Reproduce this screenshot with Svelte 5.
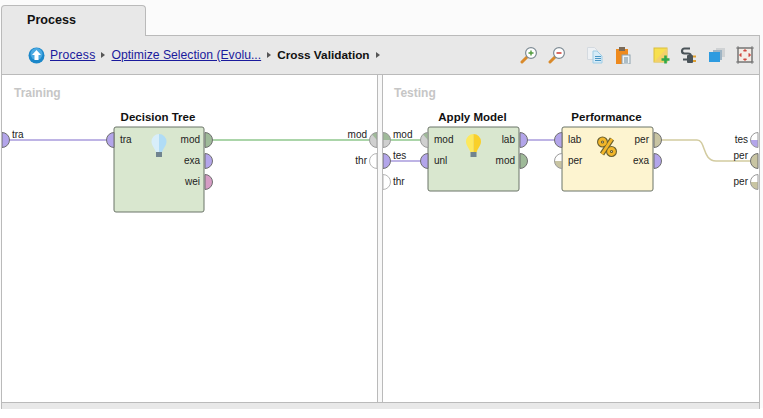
<script>
  const purple = '#b3a5ea';
  const green = '#9fba99';
  const tan = '#c8c4a2';
  const pink = '#d59cc4';
  const R = 7.5;

  // page coordinates, each svg has a matching viewBox
  const nodes = [
    {
      panel: 'left', title: 'Decision Tree', x: 114, y: 127, w: 90, h: 85, fill: '#d9e7cf', icon: 'bulb-blue',
      inputs: [{ label: 'tra', color: purple }],
      outputs: [{ label: 'mod', color: green }, { label: 'exa', color: purple }, { label: 'wei', color: pink }]
    },
    {
      panel: 'right', title: 'Apply Model', x: 428, y: 127, w: 91, h: 64, fill: '#d9e7cf', icon: 'bulb-yellow',
      inputs: [{ label: 'mod', mix: true }, { label: 'unl', color: purple }],
      outputs: [{ label: 'lab', color: purple }, { label: 'mod', color: green }]
    },
    {
      panel: 'right', title: 'Performance', x: 562, y: 127, w: 91, h: 64, fill: '#fdf4d0', icon: 'percent',
      inputs: [{ label: 'lab', color: purple }, { label: 'per', half: tan }],
      outputs: [{ label: 'per', color: tan }, { label: 'exa', color: purple }]
    }
  ];

  const leftEdge = [{ label: 'tra', y: 140, ty: 138, color: purple }];
  const leftSinks = [
    { label: 'mod', y: 140, ty: 138, mix: true },
    { label: 'thr', y: 161, ty: 164 }
  ];
  const rightSources = [
    { label: 'mod', y: 140, ty: 138, mix: true, wide: true },
    { label: 'tes', y: 161, ty: 159, color: purple },
    { label: 'thr', y: 182, ty: 185 }
  ];
  const rightSinks = [
    { label: 'tes', y: 140, ty: 143, half: purple },
    { label: 'per', y: 161, ty: 159, color: tan },
    { label: 'per', y: 182, ty: 185, half: tan }
  ];

  const portY = (node, i) => node.y + 13 + i * 21;

  // half disc, dir -1 bulges to the left, 1 to the right
  const disc = (x, y, r, dir) =>
    `M${x} ${y - r}A${r} ${r} 0 0 ${dir < 0 ? 0 : 1} ${x} ${y + r}Z`;
  const lower = (x, y, r, dir) => `M${x + dir * r} ${y}A${r} ${r} 0 0 ${dir < 0 ? 0 : 1} ${x} ${y + r}L${x} ${y}Z`;
  const upper = (x, y, r, dir) => `M${x} ${y - r}A${r} ${r} 0 0 ${dir < 0 ? 0 : 1} ${x + dir * r} ${y}L${x} ${y}Z`;
</script>

{#snippet port(p, x, y, dir)}
  {#if p.mix}
    <path d={disc(x, y, R, dir)} fill="#cfcfcf" />
    {#if p.wide}
      <path d={upper(x, y, R, dir)} fill={green} />
    {:else}
      <path d={`M${x} ${y - R}A${R} ${R} 0 0 0 ${x - 5} ${y - 5.5}L${x} ${y}Z`} fill={green} />
    {/if}
    <path d={disc(x, y, R, dir)} class="edge soft" />
  {:else if p.half}
    <path d={disc(x, y, R, dir)} fill="#fff" />
    <path d={lower(x, y, R, dir)} fill={p.half} />
    <path d={disc(x, y, R, dir)} class="edge soft" />
  {:else if p.color}
    <path d={disc(x, y, R, dir)} class="edge" style:fill={p.color} />
  {:else}
    <path d={disc(x, y, R, dir)} class="edge soft empty" />
  {/if}
{/snippet}

{#snippet bulb(cx, y, left, right)}
  <path d={`M${cx} ${y}a7.500 7.500 0 0 0 -7.500 7.500c0 4 3 6 4.500 11h3z`} fill={left} />
  <path d={`M${cx} ${y}a7.500 7.500 0 0 1 7.500 7.500c0 4 -3 6 -4.500 11h-3z`} fill={right} />
  <rect x={cx - 3} y={y + 18} width="6" height="5" fill="#71848f" />
{/snippet}

{#snippet operator(node)}
  {@const cx = node.x + node.w / 2}
  <text class="title" x={cx - 1} y={node.y - 6} text-anchor="middle">{node.title}</text>
  <rect x={node.x} y={node.y} width={node.w} height={node.h} rx="2" fill={node.fill} class="box" />
  {#each node.inputs as p, i}
    {@render port(p, node.x, portY(node, i), -1)}
    <text class="lbl" x={node.x + 6} y={portY(node, i) + 3}>{p.label}</text>
  {/each}
  {#each node.outputs as p, i}
    {@render port(p, node.x + node.w + 1, portY(node, i), 1)}
    <text class="lbl" x={node.x + node.w - 4} y={portY(node, i) + 3} text-anchor="end">{p.label}</text>
  {/each}
  {#if node.icon === 'bulb-blue'}
    {@render bulb(cx, 134, '#d8eefa', '#b0dcf6')}
  {:else if node.icon === 'bulb-yellow'}
    {@render bulb(cx, 134, '#fde95e', '#f9d02a')}
  {:else}
    <g stroke="#6a6030" stroke-width="5" fill="none">
      <circle cx="602.500" cy="142" r="3" />
      <circle cx="611.500" cy="151.500" r="3" />
      <path d="M612 139L602 154" />
    </g>
    <g stroke="#f2b62a" stroke-width="2.800" fill="none">
      <circle cx="602.500" cy="142" r="3" />
      <circle cx="611.500" cy="151.500" r="3" />
      <path d="M612 139L602 154" />
    </g>
  {/if}
{/snippet}

<div class="app">
  <div class="tabs">
    <div class="tab">Process</div>
  </div>

  <div class="frame">
    <div class="toolbar">
      <svg class="up" width="17" height="17" viewBox="0 0 17 17">
        <circle cx="8.500" cy="8.500" r="8" fill="#1b87c9" />
        <circle cx="8.500" cy="7" r="6" fill="#4aa9e2" />
        <path d="M8.500 3L13 8H10.500V13H6.500V8H4Z" fill="#fff" />
      </svg>
      <span class="crumb link first">Process</span>
      <i class="arrow"></i>
      <span class="crumb link">Optimize Selection (Evolu...</span>
      <i class="arrow"></i>
      <span class="crumb current">Cross Validation</span>
      <i class="arrow"></i>

      <div class="actions">
        <svg class="ico" viewBox="0 0 18 18">
          <path d="M7 11L2 16" stroke="#d98a2b" stroke-width="3" stroke-linecap="round" />
          <circle cx="11" cy="7" r="5.400" fill="#fff" stroke="#7c8a93" stroke-width="1.200" />
          <path d="M8.500 7h5M11 4.500v5" stroke="#4f9a3c" stroke-width="1.400" />
        </svg>
        <svg class="ico" viewBox="0 0 18 18">
          <path d="M7 11L2 16" stroke="#d98a2b" stroke-width="3" stroke-linecap="round" />
          <circle cx="11" cy="7" r="5.400" fill="#fff" stroke="#7c8a93" stroke-width="1.200" />
          <path d="M8.500 7h5" stroke="#d0453c" stroke-width="1.600" />
        </svg>
        <svg class="ico group" viewBox="0 0 18 18">
          <path d="M1.500 1.500h7l3 3v9h-10z" fill="#eef1f4" stroke="#d4dae0" />
          <path d="M7 5h4l5 5v7H7z" fill="#d6ebf7" stroke="#9fcde6" />
          <path d="M9 10.500h6M9 12.500h6M9 14.500h6" stroke="#4a97c6" />
        </svg>
        <svg class="ico" viewBox="0 0 18 18">
          <rect x="2" y="3" width="12" height="15" fill="#ee8a1e" />
          <rect x="5" y="1" width="6" height="4" fill="#7a6a58" />
          <rect x="8" y="9" width="8" height="9" fill="#eef3f6" stroke="#8ea2ae" />
          <path d="M10 12h4M10 14h4M10 16h4" stroke="#6d8796" />
        </svg>
        <svg class="ico group" viewBox="0 0 18 18">
          <rect x="2" y="2" width="13" height="14" fill="#f7e050" stroke="#d9bd3a" />
          <path d="M2 16L15 2V16Z" fill="#f3d06a" />
          <path d="M13.500 9.500v8M9.500 13.500h8" stroke="#2fa84a" stroke-width="2.600" />
        </svg>
        <svg class="ico" viewBox="0 0 18 18">
          <path d="M10 2.500H4.500a2.500 2.500 0 0 0 0 5H8a2.500 2.500 0 0 1 0 6H3" fill="none" stroke="#4a5358" stroke-width="2.200" />
          <rect x="7" y="9" width="6" height="8" rx="1" fill="#4a5358" />
          <path d="M13 10.500h3M13 15h3" stroke="#e0a030" stroke-width="2" />
        </svg>
        <svg class="ico" viewBox="0 0 18 18">
          <rect x="8" y="2" width="9" height="9" fill="#cfd2d4" />
          <rect x="5" y="4" width="9" height="10" fill="#9eb4c4" />
          <rect x="1" y="6" width="11" height="10" fill="#2d9be0" />
        </svg>
        <svg class="ico" viewBox="0 0 18 18">
          <rect x="2" y="2" width="14" height="14" fill="#f3ece6" stroke="#6d6d6d" />
          <path d="M0 2h18M0 16h18M2 0v18M16 0v18" stroke="#6d6d6d" stroke-width=".8" />
          <path d="M7.500 5L9 3.500 10.500 5zM7.500 13L9 14.500 10.500 13zM5 7.500L3.500 9 5 10.500zM13 7.500L14.500 9 13 10.500z" fill="#d0453c" stroke="#d0453c" />
        </svg>
      </div>
    </div>

    <div class="panels">
      <div class="panel">
        <svg class="canvas" viewBox="2 75 375 327" width="375" height="327">
          <text class="name" x="14" y="97">Training</text>
          <path d="M8 140H107" class="wire" stroke="#a99bdc" />
          <path d="M212 140H370" class="wire" stroke="#8fc78c" />
          {#each nodes.filter((n) => n.panel === 'left') as node}
            {@render operator(node)}
          {/each}
          {#each leftEdge as p}
            {@render port(p, 2, p.y, 1)}
            <text class="lbl" x="12" y={p.ty}>{p.label}</text>
          {/each}
          {#each leftSinks as p}
            {@render port(p, 377, p.y, -1)}
            <text class="lbl" x="367" y={p.ty} text-anchor="end">{p.label}</text>
          {/each}
        </svg>
      </div>
      <div class="gutter"></div>
      <div class="panel grow">
        <svg class="canvas" viewBox="383 75 376 327" width="376" height="327">
          <text class="name" x="394" y="97">Testing</text>
          <path d="M390 140H421" class="wire" stroke="#8fc78c" />
          <path d="M390 161H421" class="wire" stroke="#a99bdc" />
          <path d="M526 140H555" class="wire" stroke="#a99bdc" />
          <path d="M660 140H697C706 140 702 161 716 161H751" class="wire" stroke="#d2cba0" />
          {#each nodes.filter((n) => n.panel === 'right') as node}
            {@render operator(node)}
          {/each}
          {#each rightSources as p}
            {@render port(p, 383, p.y, 1)}
            <text class="lbl" x="393" y={p.ty}>{p.label}</text>
          {/each}
          {#each rightSinks as p}
            {@render port(p, 758, p.y, -1)}
            <text class="lbl" x="748" y={p.ty} text-anchor="end">{p.label}</text>
          {/each}
        </svg>
      </div>
    </div>

    <div class="status"></div>
  </div>
</div>

<style>
  :global(body) {
    background: #fff;
  }

  .app {
    width: 763px;
    height: 418px;
    overflow: hidden;
    font-family: "Liberation Sans", Arial, sans-serif;
    background: linear-gradient(#fbfbfb 408px, #fff 408px);
  }

  .tabs {
    height: 35px;
    padding: 5px 0 0 1px;
    box-sizing: border-box;
    display: flex;
  }

  .tab {
    width: 145px;
    height: 31px;
    box-sizing: border-box;
    background: #e8e8e8;
    border: 1px solid #bababa;
    border-bottom: none;
    border-radius: 4px 4px 0 0;
    padding: 6px 0 0 25px;
    font-size: 12.6px;
    font-weight: bold;
    line-height: 16px;
    color: #111;
    position: relative;
    z-index: 1;
  }

  .frame {
    width: 759px;
    margin-left: 1px;
    box-sizing: border-box;
    border-top: 1px solid #bababa;
    border-left: 1px solid #bababa;
    border-right: 1px solid #bababa;
  }

  .toolbar {
    height: 38px;
    background: #e8e8e8;
    border-bottom: 1px solid #bababa;
    display: flex;
    align-items: center;
    padding-left: 26px;
    box-sizing: content-box;
  }

  .up {
    flex: none;
  }

  .crumb {
    font-size: 12.2px;
    white-space: nowrap;
  }

  .link {
    color: #1a1a9c;
    text-decoration: underline;
  }

  .first {
    margin-left: 5px;
    letter-spacing: 0.2px;
  }

  .current {
    font-weight: bold;
    font-size: 11.8px;
    color: #111;
  }

  .arrow {
    width: 0;
    height: 0;
    margin: 0 6px 0 6px;
    border-left: 4px solid #555;
    border-top: 3.5px solid transparent;
    border-bottom: 3.5px solid transparent;
  }

  .actions {
    margin-left: auto;
    padding-right: 5px;
    display: flex;
    gap: 10px;
  }

  .ico {
    width: 18px;
    height: 18px;
    display: block;
  }

  .group {
    margin-left: 10px;
  }

  .panels {
    display: flex;
    height: 327px;
    background: #fff;
  }

  .panel {
    width: 375px;
    flex: none;
    overflow: hidden;
  }

  .grow {
    flex: 1;
    width: auto;
  }

  .gutter {
    width: 6px;
    box-sizing: border-box;
    flex: none;
    background: #f8f8f8;
    border-left: 1px solid #bababa;
    border-right: 1px solid #bababa;
  }

  .canvas {
    display: block;
  }

  .status {
    height: 6px;
    background: #e8e8e8;
    border-top: 1px solid #bababa;
  }

  .name {
    font-size: 12px;
    font-weight: bold;
    fill: #c6c6c6;
  }

  .title {
    font-size: 11.5px;
    font-weight: bold;
    fill: #111;
  }

  .lbl {
    font-size: 10px;
    fill: #222;
  }

  .box {
    stroke: #6b7468;
    stroke-width: 1;
  }

  .wire {
    fill: none;
    stroke-width: 1.5;
  }

  .edge {
    fill: none;
    stroke: #6f6f6f;
    stroke-width: 1;
  }

  .soft {
    stroke: #9a9a9a;
  }

  .empty {
    fill: #fff;
    stroke: #b5b5b5;
  }
</style>
